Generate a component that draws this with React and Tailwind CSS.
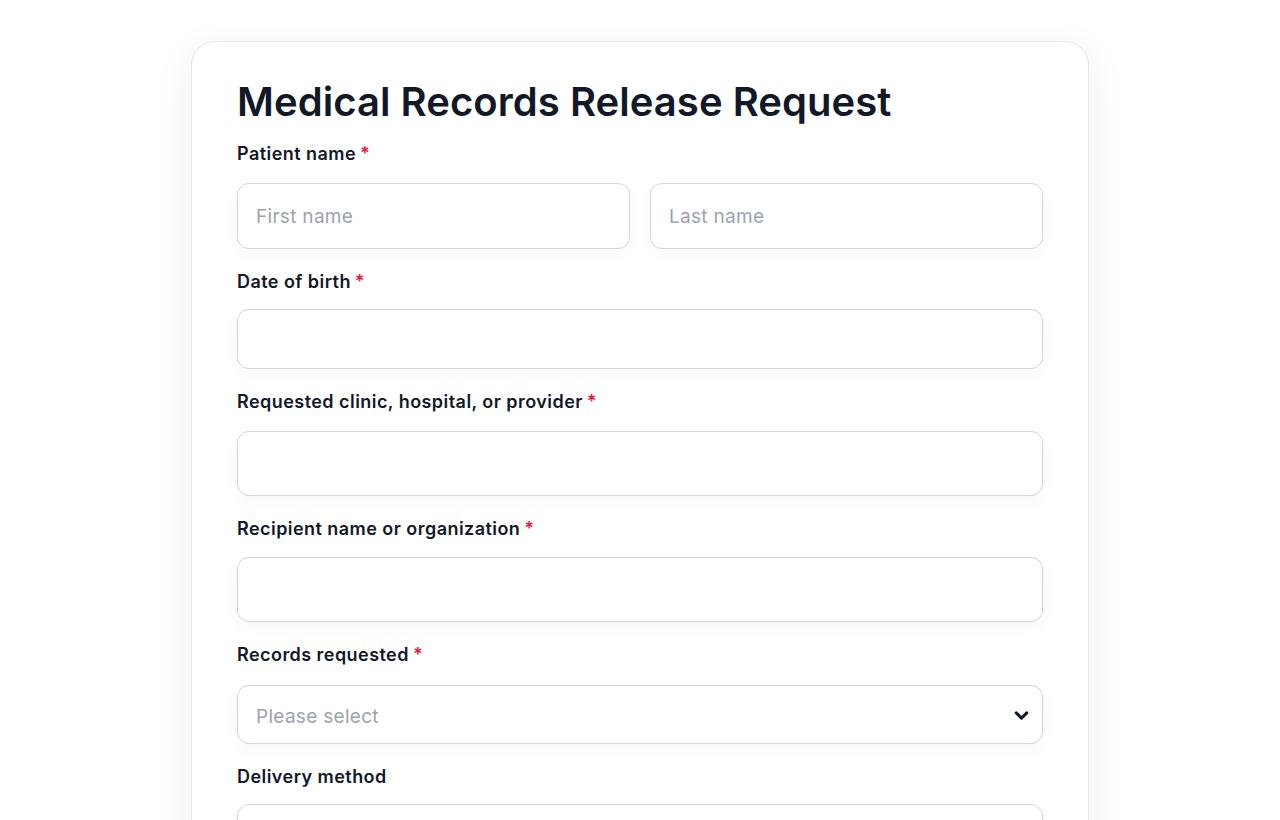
import React from "react";

function Label({ children, required }) {
  return (
    <div className="h-6 flex items-center text-[18px] font-semibold tracking-[0.45px] text-[#111827] leading-6">
      <span>{children}</span>
      {required && <span className="ml-[4px] text-[#e11d48]">*</span>}
    </div>
  );
}

function Input({ placeholder, h }) {
  return (
    <div
      className={`flex items-center rounded-xl border border-[#d4d6dd] bg-white px-[18px] text-[19px] tracking-[0.3px] text-[#9ca3af] shadow-[0_4px_16px_rgba(15,23,42,0.04)] ${h}`}
    >
      <span className="pt-[2px]">{placeholder}</span>
    </div>
  );
}

export default function App() {
  return (
    <div
      className="min-h-[820px] bg-white pt-[41px]"
      style={{ fontFamily: "Inter, 'Noto Sans', sans-serif" }}
    >
      <div className="mx-auto w-[898px] rounded-[24px] border border-[#e5e7eb] bg-white px-[45px] pt-[36px] pb-10 shadow-[0_10px_40px_rgba(15,23,42,0.07)]">
        <h1 className="text-[40px] font-semibold leading-[48px] tracking-[0.05px] text-[#111827]">
          Medical Records Release Request
        </h1>
        <div className="mt-[16px]">
          <Label required>Patient name</Label>
          <div className="mt-[17px] grid grid-cols-2 gap-[20px]">
            <Input placeholder="First name" h="h-[66px]" />
            <Input placeholder="Last name" h="h-[66px]" />
          </div>
        </div>
        <div className="mt-[21px]">
          <Label required>Date of birth</Label>
          <div className="mt-[15px]">
            <Input h="h-[60px]" />
          </div>
        </div>
        <div className="mt-[21px]">
          <Label required>Requested clinic, hospital, or provider</Label>
          <div className="mt-[17px]">
            <Input h="h-[65px]" />
          </div>
        </div>
        <div className="mt-[21px]">
          <Label required>Recipient name or organization</Label>
          <div className="mt-[16px]">
            <Input h="h-[65px]" />
          </div>
        </div>
        <div className="mt-[21px]">
          <Label required>Records requested</Label>
          <div className="mt-[18px]">
            <div className="flex h-[59px] items-center justify-between rounded-xl border border-[#d4d6dd] bg-white pl-[18px] pr-[10px] text-[19px] tracking-[0.3px] text-[#9ca3af] shadow-[0_4px_16px_rgba(15,23,42,0.04)]">
              <span className="pt-[6px]">Please select</span>
              <svg className="mt-[2px]" width="21" height="21" viewBox="0 0 24 24" fill="none" stroke="#111827" strokeWidth="3.4" strokeLinecap="round" strokeLinejoin="round">
                <path d="M6 9l6 6 6-6" />
              </svg>
            </div>
          </div>
        </div>
        <div className="mt-[21px]">
          <Label>Delivery method</Label>
          <div className="mt-[15px]">
            <Input h="h-[60px]" />
          </div>
        </div>
      </div>
    </div>
  );
}
